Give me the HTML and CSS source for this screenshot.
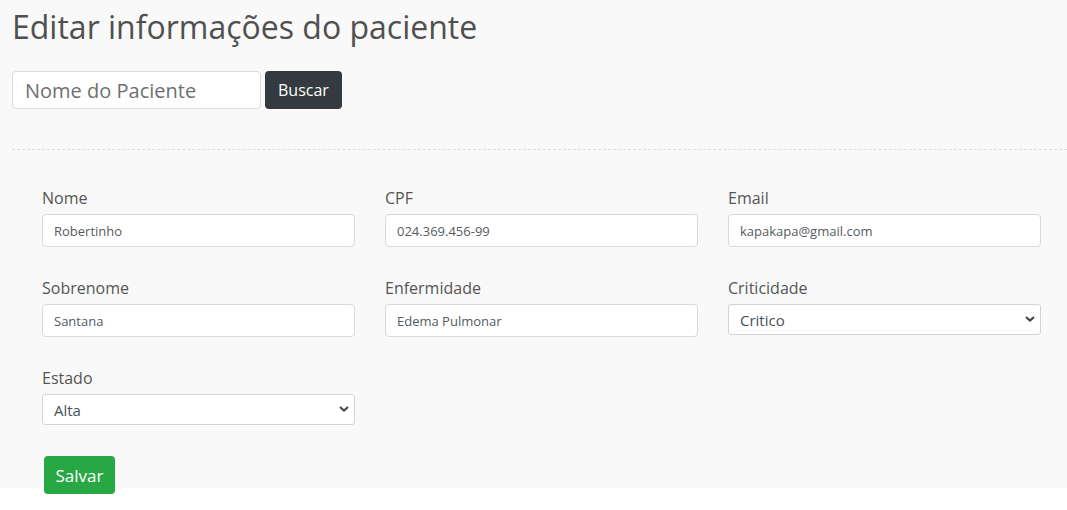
FILE: index.html
```html
<!DOCTYPE html>
<html lang="pt-BR">
<head>
<meta charset="utf-8">
<title>Editar informações do paciente</title>
<link rel="stylesheet" href="styles.css">
</head>
<body>
<div class="page">
  <h1 class="title">Editar informações do paciente</h1>
  <div class="search">
    <input class="search-input" type="text" placeholder="Nome do Paciente">
    <button class="btn btn-dark" type="button">Buscar</button>
  </div>
  <hr class="divider">
  <form class="form">
    <div class="grid">
      <div class="field">
        <label class="label">Nome</label>
        <input class="control" type="text" value="Robertinho">
      </div>
      <div class="field">
        <label class="label">CPF</label>
        <input class="control" type="text" value="024.369.456-99">
      </div>
      <div class="field">
        <label class="label">Email</label>
        <input class="control" type="text" value="kapakapa@gmail.com">
      </div>
      <div class="field">
        <label class="label">Sobrenome</label>
        <input class="control" type="text" value="Santana">
      </div>
      <div class="field">
        <label class="label">Enfermidade</label>
        <input class="control" type="text" value="Edema Pulmonar">
      </div>
      <div class="field">
        <label class="label">Criticidade</label>
        <div class="select-wrap">
          <select class="select"><option>Critico</option></select>
          <svg class="chevron" width="10" height="6" viewBox="0 0 10 6"><path d="M1 1l4 3.6L9 1" fill="none" stroke="#3f4449" stroke-width="2"/></svg>
        </div>
      </div>
      <div class="field">
        <label class="label">Estado</label>
        <div class="select-wrap">
          <select class="select"><option>Alta</option></select>
          <svg class="chevron" width="10" height="6" viewBox="0 0 10 6"><path d="M1 1l4 3.6L9 1" fill="none" stroke="#3f4449" stroke-width="2"/></svg>
        </div>
      </div>
    </div>
    <button class="btn btn-success" type="button">Salvar</button>
  </form>
</div>
</body>
</html>
```
FILE: styles.css
```css
* { box-sizing: border-box; }
html, body {
  margin: 0;
  background: #ffffff;
  min-height: 510px;
}
body {
  font-family: "Open Sans", "Liberation Sans", sans-serif;
}
.page {
  background: #f9f9f9;
  height: 488px;
  padding: 0 0 0 12px;
}
.title {
  margin: 0;
  padding-top: 8px;
  font-size: 32px;
  font-weight: 400;
  line-height: 38px;
  color: #505050;
}
.search {
  display: flex;
  margin-top: 25px;
}
.search-input {
  width: 249px;
  height: 38px;
  border: 1px solid #dcdcdc;
  border-radius: 4px;
  background: #fff;
  padding: 0 12px;
  font-family: inherit;
  font-size: 20px;
  color: #495057;
}
.search-input::placeholder { color: #6f6f6f; }
.btn {
  height: 38px;
  border: none;
  border-radius: 4px;
  font-family: inherit;
  color: #fff;
  padding: 0 13px;
}
.btn-dark {
  margin-left: 4px;
  background: #343a40;
  font-size: 16px;
}
.btn-success {
  position: relative;
  background: #28a745;
  font-size: 17px;
  margin: 31px 0 0 2px;
  width: 71px;
  padding: 0;
}
.divider {
  margin: 40px 0 0 0;
  border: 0;
  border-top: 1px dashed #dedede;
  height: 0;
}
.form {
  padding: 36px 26px 0 30px;
}
.grid {
  display: grid;
  grid-template-columns: repeat(3, 1fr);
  column-gap: 30px;
  row-gap: 29px;
}
.field {
  display: flex;
  flex-direction: column;
}
.label {
  font-size: 16px;
  line-height: 24px;
  color: #555;
  margin-bottom: 4px;
}
.control {
  height: 33px;
  border: 1px solid #d9d9d9;
  border-radius: 4px;
  background: #fff;
  padding: 0 11px;
  font-family: inherit;
  font-size: 13px;
  color: #555b61;
}
.select-wrap { position: relative; }
.select {
  width: 100%;
  height: 31px;
  appearance: none;
  -webkit-appearance: none;
  border: 1px solid #ced4da;
  border-radius: 3px;
  background: #fff;
  padding: 0 11px;
  font-family: inherit;
  font-size: 15px;
  color: #495057;
}
.chevron {
  position: absolute;
  right: 6px;
  top: 12px;
}
```
